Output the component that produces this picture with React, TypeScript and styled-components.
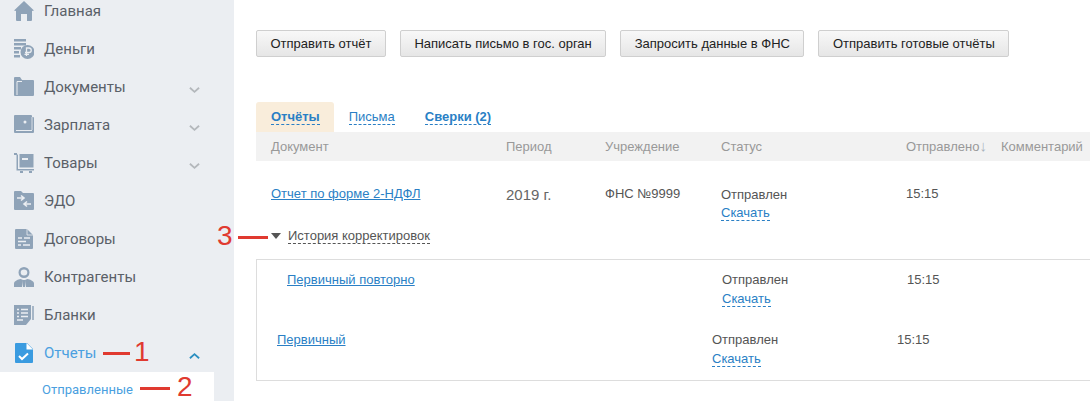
import React from 'react';
import styled, { createGlobalStyle } from 'styled-components';

const GlobalStyle = createGlobalStyle`
  * { box-sizing: border-box; }
  html, body { margin: 0; padding: 0; background: #fff; }
  body { width: 1090px; height: 401px; overflow: hidden; font-family: "Liberation Sans", Arial, sans-serif; }
`;

const Page = styled.div`
  display: flex;
  width: 1090px;
  height: 401px;
  overflow: hidden;
  position: relative;
`;

const Sidebar = styled.aside`
  width: 234px;
  flex: none;
  background: #ebeef2;
  overflow: hidden;
`;

const Menu = styled.ul`
  list-style: none;
  margin: -8px 0 0;
  padding: 0;
`;

const MenuItem = styled.li<{ $active?: boolean }>`
  display: flex;
  align-items: center;
  height: 38px;
  padding-left: 14px;
  font: 15px Roboto, sans-serif;
  color: ${({ $active }) => ($active ? '#4a9fe0' : '#5a6068')};
  svg.icon { width: 20px; height: 20px; margin-right: 10px; flex: none; }
`;

const MenuLabel = styled.span`
  flex: 1;
`;

const Chevron = styled.svg`
  width: 11px;
  height: 8px;
  margin-right: 34px;
  margin-top: 6px;
`;

const SubItem = styled.div`
  width: 214px;
  height: 30px;
  background: #fff;
  padding-left: 42px;
  font: 13px/35px Roboto, sans-serif;
  color: #4a9fe0;
`;

const Main = styled.main`
  flex: 1;
  min-width: 0;
  padding: 30px 0 0 22px;
`;

const Toolbar = styled.div`
  display: flex;
  gap: 14px;
`;

const ActionButton = styled.button`
  height: 27px;
  padding: 0 13.5px;
  border: 1px solid #cfcfcf;
  border-radius: 2px;
  background: linear-gradient(#f8f8f8, #e6e6e6);
  font: 13px "Liberation Sans", Arial, sans-serif;
  color: #222;
  white-space: nowrap;
`;

const Tabs = styled.div`
  display: flex;
  margin-top: 45px;
  height: 30px;
  font-size: 13px;
`;

const Tab = styled.div<{ $active?: boolean; $bold?: boolean }>`
  padding: 7px ${({ $active }) => ($active ? 14 : 15)}px 0 15px;
  border-radius: 3px 3px 0 0;
  background: ${({ $active }) => ($active ? '#f9eddb' : 'transparent')};
  font-weight: ${({ $bold }) => ($bold ? 700 : 400)};
  color: #2a7fc5;
`;

const Dashed = styled.span<{ $color?: string }>`
  color: ${({ $color }) => $color || '#2a7fc5'};
  border-bottom: 1px dashed ${({ $color }) => $color || '#2a7fc5'};
`;

const HeaderRow = styled.div`
  display: grid;
  grid-template-columns: 235px 99px 116px 185px 95px 1fr;
  height: 29px;
  align-items: center;
  padding-left: 15px;
  background: #f2f2f2;
  font-size: 13px;
  color: #999;
  white-space: nowrap;
`;

const SortArrow = styled.span`
  font-size: 15px;
  line-height: 13px;
  color: #a9b3bd;
`;

const ReportRow = styled.div`
  display: grid;
  grid-template-columns: 235px 99px 116px 185px 95px 1fr;
  padding: 25px 0 0 15px;
  height: 46px;
  font-size: 13px;
  line-height: 15px;
  color: #555;
`;

const DocLink = styled.a`
  color: #2a7fc5;
  text-decoration: underline;
  white-space: nowrap;
`;

const Period = styled.span`
  font-size: 15px;
  line-height: 17px;
  color: #666;
`;

const StatusCell = styled.div<{ $nested?: boolean }>`
  display: flex;
  flex-direction: column;
  align-items: flex-start;
  gap: ${({ $nested }) => ($nested ? 4 : 3)}px;
  padding-top: ${({ $nested }) => ($nested ? 0 : 1)}px;
  white-space: nowrap;
`;

const History = styled.div`
  display: flex;
  align-items: center;
  height: 20px;
  margin-top: 19px;
  padding-left: 15px;
  font-size: 13px;
`;

const Triangle = styled.span`
  width: 0;
  height: 0;
  border-left: 5px solid transparent;
  border-right: 5px solid transparent;
  border-top: 6px solid #555;
  margin-right: 7px;
`;

const HistoryBox = styled.div`
  margin-top: 13px;
  height: 122px;
  border: 1px solid #ddd;
  border-right: 0;
`;

const HistoryRow = styled.div<{ $left: number; $top: number }>`
  display: grid;
  grid-template-columns: 435px 185px 1fr;
  padding-left: ${({ $left }) => $left}px;
  padding-top: ${({ $top }) => $top}px;
  height: ${({ $top }) => $top + 34}px;
  font-size: 13px;
  line-height: 15px;
  color: #555;
`;

const Note = styled.div<{ $x: number; $y: number }>`
  position: absolute;
  left: ${({ $x }) => $x}px;
  top: ${({ $y }) => $y}px;
  display: flex;
  align-items: center;
  font: 28px/22px "Liberation Sans", Arial, sans-serif;
  color: #e03a30;
`;

const NoteLine = styled.i<{ $w: number; $left: number; $right: number }>`
  display: block;
  width: ${({ $w }) => $w}px;
  height: 3px;
  margin: 2px ${({ $right }) => $right}px 0 ${({ $left }) => $left}px;
  background: #e03a30;
`;

const SLATE = '#8fa3b8';
const BG = '#ebeef2';

const icons: Record<string, React.ReactNode> = {
  home: <path d="M10 0 L20 9.500 L18 10 V19 Q18 20 17 20 H13 V13 H7 V20 H3 Q2 20 2 19 V10 L0 9.500 Z" fill={SLATE} />,
  money: (
    <g fill={SLATE}>
      <path d="M0 0h12v2.500H0zM0 4h12v2.500H0zM0 8h7v2.500H0zM0 12h5v2.500H0zM0 16h6v2.500H0z" />
      <circle cx="13.500" cy="13" r="7" />
      <path d="M12.500 17V9h2.500a2 2 0 0 1 0 4.500h-4M10.500 15.300h4.500" fill="none" stroke={BG} strokeWidth="1.300" />
    </g>
  ),
  folder: (
    <g>
      <path d="M0 1q0-1 1-1h5l2 3h11q1 0 1 1v14q0 1-1 1H1q-1 0-1-1z" fill={SLATE} />
      <path d="M3 18V4.500h5" fill="none" stroke={BG} strokeWidth="1" />
    </g>
  ),
  wallet: (
    <g>
      <path d="M1 0h16q1 0 1 1v1h1q1 0 1 1v14q0 1-1 1H1q-1 0-1-1V1q0-1 1-1z" fill={SLATE} />
      <path d="M2 15.500h16" stroke={BG} strokeWidth="1" />
      <path d="M18 2v13" stroke={BG} strokeWidth="0.800" />
      <circle cx="11" cy="7" r="1.500" fill={BG} />
    </g>
  ),
  goods: (
    <g fill={SLATE}>
      <path d="M0 0h3v1.500h1V16h16v1.500H2.500V2H0z" />
      <rect x="5.500" y="1" width="14" height="13.500" />
      <rect x="8" y="5" width="6" height="2" fill={BG} />
      <rect x="6" y="18" width="3" height="2" />
      <rect x="15" y="18" width="3" height="2" />
    </g>
  ),
  edo: (
    <g>
      <path d="M0 1q0-1 1-1h6l2 2h10q1 0 1 1v15q0 1-1 1H1q-1 0-1-1z" fill={SLATE} />
      <path d="M3 7h6M7 4.500 10 7 7 9.500M17 13h-6M13 10.500 10 13l3 2.500" fill="none" stroke={BG} strokeWidth="1.600" />
    </g>
  ),
  contract: (
    <g>
      <path d="M2 0h11l6 6v13q0 1-1 1H2q-1 0-1-1V1q0-1 1-1z" fill={SLATE} />
      <path d="M4 9h4M10 9h6M4 12.500h8M4 16h3M9 16h7" stroke={BG} strokeWidth="1.500" />
      <path d="M13 0v6h6" fill="none" stroke={BG} strokeWidth="0.800" />
    </g>
  ),
  person: (
    <g fill={SLATE}>
      <path d="M10 0a5.500 5.500 0 1 1 0 11a5.500 5.500 0 0 1 0-11zM10 2.500a3.300 3 0 1 0 0 6a3.300 3 0 0 0 0-6z" fillRule="evenodd" />
      <path d="M0 20v-3.500q0-3 6.500-4.500l2.500 1-1 7zM20 20v-3.500q0-3-6.500-4.500l-2.500 1 1 7z" />
      <path d="M9 13h2l.500 1.500-.500 5.500H9l-.500-5.500z" />
    </g>
  ),
  blank: (
    <g>
      <path d="M0 0h17v14l-5 6H0z" fill={SLATE} />
      <path d="M3 4.500h2M7 4.500h7M3 8h2M7 8h7M3 11.500h2M7 11.500h7M3 15h6" stroke={BG} strokeWidth="1.500" />
      <path d="M19 1v14" stroke={SLATE} strokeWidth="1.500" />
    </g>
  ),
  report: (
    <g>
      <path d="M2 0h11l6 6v13q0 1-1 1H2q-1 0-1-1V1q0-1 1-1z" fill="#3a9be0" />
      <path d="M12.500 0l6.500 6.500h-6.500z" fill="#fff" />
      <path d="M5 13 8 16l6-5.500" fill="none" stroke="#fff" strokeWidth="2" />
    </g>
  ),
};

const menu = [
  { icon: 'home', label: 'Главная' },
  { icon: 'money', label: 'Деньги' },
  { icon: 'folder', label: 'Документы', arrow: true },
  { icon: 'wallet', label: 'Зарплата', arrow: true },
  { icon: 'goods', label: 'Товары', arrow: true },
  { icon: 'edo', label: 'ЭДО' },
  { icon: 'contract', label: 'Договоры' },
  { icon: 'person', label: 'Контрагенты' },
  { icon: 'blank', label: 'Бланки' },
  { icon: 'report', label: 'Отчеты', open: true },
];

const buttons = ['Отправить отчёт', 'Написать письмо в гос. орган', 'Запросить данные в ФНС', 'Отправить готовые отчёты'];

const App = () => (
  <Page>
    <GlobalStyle />
    <Sidebar>
      <Menu>
        {menu.map((m) => (
          <MenuItem key={m.label} $active={m.open}>
            <svg className="icon" viewBox="0 0 20 20">{icons[m.icon]}</svg>
            <MenuLabel>{m.label}</MenuLabel>
            {m.arrow && (
              <Chevron viewBox="0 0 12 8">
                <path d="M1 1.500 6 6l5-4.500" fill="none" stroke="#b4b8bc" strokeWidth="2" />
              </Chevron>
            )}
            {m.open && (
              <Chevron viewBox="0 0 12 8">
                <path d="M1 6.500 6 2l5 4.500" fill="none" stroke="#2a8fc0" strokeWidth="2" />
              </Chevron>
            )}
          </MenuItem>
        ))}
      </Menu>
      <SubItem>Отправленные</SubItem>
    </Sidebar>
    <Main>
      <Toolbar>
        {buttons.map((b) => (
          <ActionButton key={b}>{b}</ActionButton>
        ))}
      </Toolbar>
      <Tabs>
        <Tab $active $bold><Dashed>Отчёты</Dashed></Tab>
        <Tab><Dashed>Письма</Dashed></Tab>
        <Tab $bold><Dashed>Сверки (2)</Dashed></Tab>
      </Tabs>
      <HeaderRow>
        <span>Документ</span>
        <span>Период</span>
        <span>Учреждение</span>
        <span>Статус</span>
        <span>Отправлено<SortArrow>↓</SortArrow></span>
        <span>Комментарий</span>
      </HeaderRow>
      <ReportRow>
        <DocLink>Отчет по форме 2-НДФЛ</DocLink>
        <Period>2019 г.</Period>
        <span>ФНС №9999</span>
        <StatusCell>
          <span>Отправлен</span>
          <Dashed>Скачать</Dashed>
        </StatusCell>
        <span>15:15</span>
      </ReportRow>
      <History>
        <Triangle />
        <Dashed $color="#555">История корректировок</Dashed>
      </History>
      <HistoryBox>
        <HistoryRow $left={30} $top={12}>
          <DocLink>Первичный повторно</DocLink>
          <StatusCell $nested>
            <span>Отправлен</span>
            <Dashed>Скачать</Dashed>
          </StatusCell>
          <span>15:15</span>
        </HistoryRow>
        <HistoryRow $left={20} $top={26}>
          <DocLink>Первичный</DocLink>
          <StatusCell $nested>
            <span>Отправлен</span>
            <Dashed>Скачать</Dashed>
          </StatusCell>
          <span>15:15</span>
        </HistoryRow>
      </HistoryBox>
    </Main>
    <Note $x={99} $y={341}><NoteLine $w={27} $left={4} $right={4} />1</Note>
    <Note $x={136} $y={376}><NoteLine $w={30} $left={4} $right={7} />2</Note>
    <Note $x={217} $y={225}>3<NoteLine $w={30} $left={5} $right={5} /></Note>
  </Page>
);

export default App;
